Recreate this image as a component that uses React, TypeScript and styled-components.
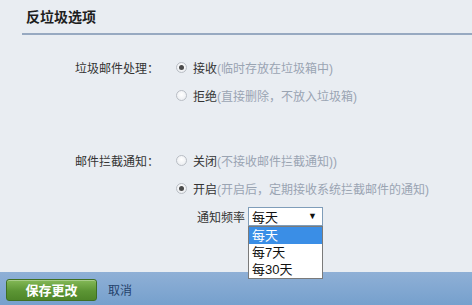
import React from "react";
import styled, { createGlobalStyle } from "styled-components";

const Global = createGlobalStyle`
  html, body { margin: 0; padding: 0; }
  body { background: #e9edf2; font-family: "Liberation Sans", "Noto Sans CJK SC", sans-serif; }
`;

const Page = styled.div`
  position: relative;
  width: 472px;
  height: 305px;
  background: #e9edf2;
  display: flex;
  flex-direction: column;
  overflow: hidden;
  color: #333;
  font-size: 12px;
`;

const Header = styled.div`
  margin-left: 22px;
  height: 33px;
  border-bottom: 2px solid #97a9c1;
  box-sizing: content-box;
  display: flex;
  align-items: center;
  padding-left: 4px;
`;

const Title = styled.h1`
  margin: 0;
  font-size: 14px;
  font-weight: bold;
  color: #1e1e1e;
  line-height: 1;
  margin-top: 1px;
`;

const Form = styled.div`
  flex: 1;
  padding-top: 18px;
  display: flex;
  flex-direction: column;
  gap: 37px;
`;

const Group = styled.div`
  display: flex;
  flex-direction: column;
`;

const Row = styled.div`
  display: grid;
  grid-template-columns: 161px 1fr;
  height: 28px;
  align-items: center;
`;

const Label = styled.div`
  text-align: right;
  padding-right: 2px;
  color: #333;
`;

const Option = styled.div`
  display: flex;
  align-items: center;
  margin-left: 15px;
  gap: 6px;
`;

const Radio = styled.span<{ $checked?: boolean }>`
  width: 11px;
  height: 11px;
  border-radius: 50%;
  border: 1px solid #b9bec5;
  background: radial-gradient(circle at 50% 40%, #ffffff 0%, #eef0f3 70%, #e1e4e8 100%);
  display: flex;
  align-items: center;
  justify-content: center;
  box-sizing: border-box;
  &::after {
    content: "";
    width: 5px;
    height: 5px;
    border-radius: 50%;
    background: ${(p) => (p.$checked ? "#4a4a4a" : "transparent")};
  }
`;

const OptText = styled.span`
  color: #333;
`;

const Hint = styled.span`
  color: #9aa4b2;
`;

const FreqRow = styled.div`
  display: flex;
  align-items: center;
  height: 28px;
  padding-left: 197px;
  gap: 3px;
`;

const SelectWrap = styled.div`
  position: relative;
`;

const SelectBox = styled.div`
  width: 75px;
  height: 19px;
  box-sizing: border-box;
  border: 1px solid #7f9db9;
  background: #fff;
  display: flex;
  align-items: center;
  justify-content: space-between;
  padding: 0 5px 0 3px;
  font-size: 13px;
  color: #111;
`;

const Arrow = styled.span`
  font-size: 9px;
  color: #111;
`;

const DropList = styled.ul`
  position: absolute;
  left: 0;
  top: 19px;
  width: 75px;
  margin: 0;
  padding: 0;
  list-style: none;
  background: #fff;
  border: 1px solid #7a7a7a;
  box-sizing: border-box;
  z-index: 5;
`;

const DropItem = styled.li<{ $active?: boolean }>`
  height: 17px;
  line-height: 17px;
  padding-left: 3px;
  font-size: 13px;
  color: ${(p) => (p.$active ? "#fff" : "#111")};
  background: ${(p) => (p.$active ? "#3a8ee6" : "#fff")};
`;

const Footer = styled.div`
  height: 33px;
  background: linear-gradient(#8fb0d6, #76a0cd);
  display: flex;
  align-items: center;
  padding-left: 6px;
  gap: 11px;
  box-sizing: border-box;
  padding-top: 2px;
`;

const SaveButton = styled.button`
  width: 91px;
  height: 22px;
  border: 1px solid #3f6f22;
  border-radius: 3px;
  background: linear-gradient(#84b957, #5c9534 55%, #4e8629);
  color: #fff;
  font-weight: bold;
  font-size: 13px;
  font-family: "Liberation Sans", "Noto Sans CJK SC", sans-serif;
  padding: 0;
  box-shadow: inset 0 1px 0 rgba(255, 255, 255, 0.3);
`;

const CancelLink = styled.span`
  color: #23416b;
  font-size: 12px;
`;

export default function App() {
  return (
    <Page>
      <Global />
      <Header>
        <Title>反垃圾选项</Title>
      </Header>
      <Form>
        <Group>
          <Row>
            <Label>垃圾邮件处理：</Label>
            <Option>
              <Radio $checked />
              <OptText>
                接收<Hint>(临时存放在垃圾箱中)</Hint>
              </OptText>
            </Option>
          </Row>
          <Row>
            <span />
            <Option>
              <Radio />
              <OptText>
                拒绝<Hint>(直接删除，不放入垃圾箱)</Hint>
              </OptText>
            </Option>
          </Row>
        </Group>
        <Group>
          <Row>
            <Label>邮件拦截通知：</Label>
            <Option>
              <Radio />
              <OptText>
                关闭<Hint>(不接收邮件拦截通知))</Hint>
              </OptText>
            </Option>
          </Row>
          <Row>
            <span />
            <Option>
              <Radio $checked />
              <OptText>
                开启<Hint>(开启后，定期接收系统拦截邮件的通知)</Hint>
              </OptText>
            </Option>
          </Row>
          <FreqRow>
            <span>通知频率</span>
            <SelectWrap>
              <SelectBox>
                <span>每天</span>
                <Arrow>▼</Arrow>
              </SelectBox>
              <DropList>
                <DropItem $active>每天</DropItem>
                <DropItem>每7天</DropItem>
                <DropItem>每30天</DropItem>
              </DropList>
            </SelectWrap>
          </FreqRow>
        </Group>
      </Form>
      <Footer>
        <SaveButton>保存更改</SaveButton>
        <CancelLink>取消</CancelLink>
      </Footer>
    </Page>
  );
}
